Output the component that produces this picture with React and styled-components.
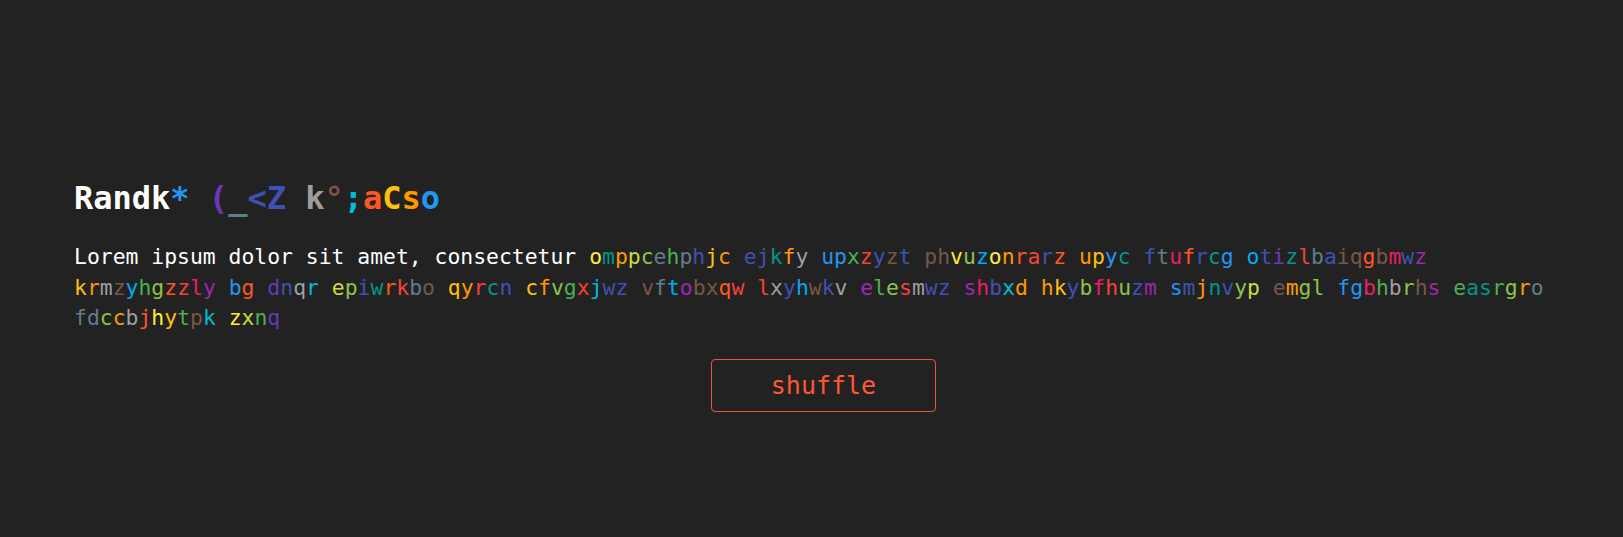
import React from 'react';
import styled, { createGlobalStyle } from 'styled-components';

const palette = {
  R: '#f44336', P: '#e91e63', U: '#9c27b0', D: '#673ab7', I: '#3f51b5',
  B: '#2196f3', L: '#03a9f4', C: '#00bcd4', T: '#009688', G: '#4caf50',
  g: '#8bc34a', M: '#cddc39', Y: '#ffeb3b', A: '#ffc107', O: '#ff9800',
  E: '#ff5722', N: '#795548', Z: '#9e9e9e', S: '#607d8b',
};

// each word: text and one colour code per letter
const words = [
  ['omppcehphjc', 'YTOMgSGSIAO'],
  ['ejkfy', 'IITOZ'],
  ['upxzyzt', 'BBGRINI'],
  ['phvuzonrarz', 'NNYgLYOERIE'],
  ['upyc', 'OABT'],
  ['ftufrcg', 'ISPEITB'],
  ['otizlbaiqgbmwz', 'LIDTRSINNENPIU'],
  ['krmzyhgzzly', 'AOZNLGgERPU'],
  ['bg', 'BE'],
  ['dnqr', 'DIZC'],
  ['epiwrkbo', 'MgITERSN'],
  ['qyrcn', 'AORTI'],
  ['cfvgxjwz', 'AOgGRCII'],
  ['vftobxqw', 'NSLUNNER'],
  ['lxyhwkv', 'RZILNIZ'],
  ['elesmwz', 'UGgRZII'],
  ['shbxd', 'UPICO'],
  ['hkybfhuzm', 'OAIgPRgIU'],
  ['smjnvyp', 'BIOTIgM'],
  ['emgl', 'NOgg'],
  ['fgbhbrhs', 'BBPGZgNU'],
  ['easrgro', 'GTTGgOS'],
  ['fdccbjhytpk', 'SSgOZEYAGNC'],
  ['zxnq', 'YMGD'],
];

const title = [
  ['Randk', '#ffffff'], ['*', palette.B], [' ', '#fff'],
  ['(', palette.D], ['_', palette.S], ['<', palette.I], ['Z', palette.I], [' ', '#fff'],
  ['k', palette.Z], ['°', palette.N], [';', palette.C], ['a', palette.E],
  ['C', palette.A], ['s', palette.O], ['o', palette.B],
];

const GlobalStyle = createGlobalStyle`
  html, body {
    margin: 0;
    padding: 0;
    background: #222222;
  }
`;

const Page = styled.main`
  min-height: 537px;
  box-sizing: border-box;
  padding: 180px 74px 0 74px;
  font-family: "DejaVu Sans Mono", monospace;
  color: #ffffff;
`;

const Title = styled.h1`
  margin: 0 0 25px;
  font-size: 32px;
  font-weight: bold;
  line-height: 37px;
`;

const Text = styled.p`
  margin: 0;
  font-size: 21.4px;
  line-height: 30.5px;
`;

const Letter = styled.span`
  color: ${(p) => p.$c};
`;

const Actions = styled.div`
  display: flex;
  justify-content: center;
  padding: 25px 0 0 24px;
`;

const ShuffleButton = styled.button`
  width: 225px;
  height: 53px;
  background: transparent;
  border: 1px solid #e8553a;
  border-radius: 4px;
  color: #ff5733;
  font-family: "DejaVu Sans Mono", monospace;
  font-size: 25px;
  cursor: pointer;
`;

const Word = ({ text, codes }) => (
  <>
    {text.split('').map((ch, i) => (
      <Letter key={i} $c={palette[codes[i]]}>{ch}</Letter>
    ))}
  </>
);

export default function App() {
  return (
    <>
      <GlobalStyle />
      <Page>
        <Title>
          {title.map(([t, c], i) => (
            <Letter key={i} $c={c}>{t}</Letter>
          ))}
        </Title>
        <Text>
          Lorem ipsum dolor sit amet, consectetur{' '}
          {words.map(([t, c], i) => (
            <React.Fragment key={i}>
              <Word text={t} codes={c} />
              {i < words.length - 1 ? ' ' : ''}
            </React.Fragment>
          ))}
        </Text>
        <Actions>
          <ShuffleButton>shuffle</ShuffleButton>
        </Actions>
      </Page>
    </>
  );
}
